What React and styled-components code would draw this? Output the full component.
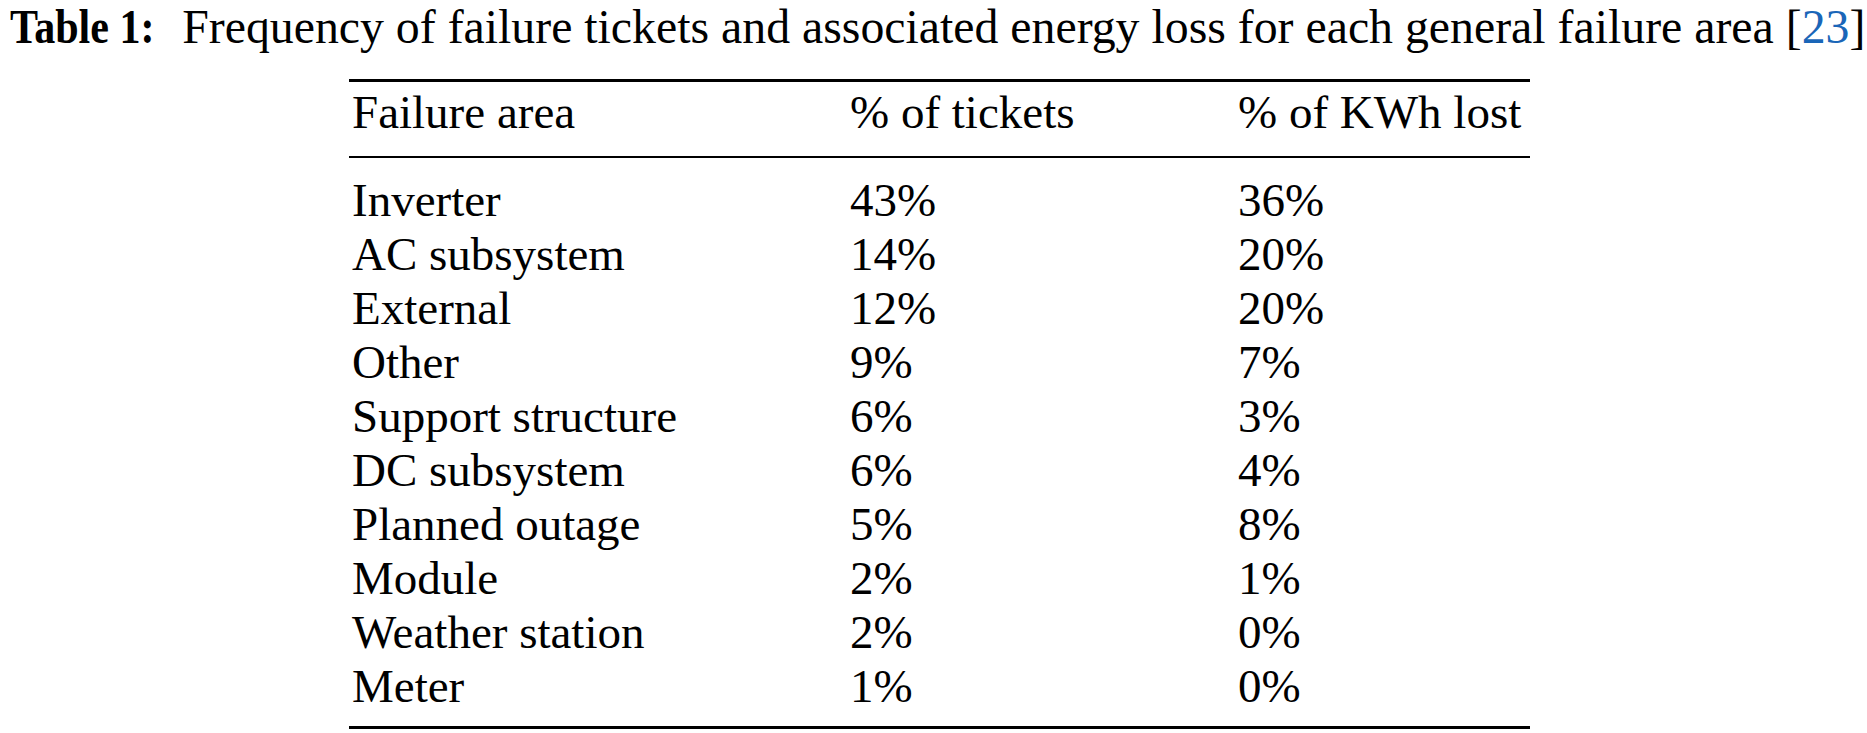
import React from "react";
import styled, { createGlobalStyle } from "styled-components";

const GlobalStyle = createGlobalStyle`
  html, body {
    margin: 0;
    padding: 0;
    background: #fff;
  }
  body {
    font-family: "Liberation Serif", "Times New Roman", serif;
    color: #000;
  }
`;

const Page = styled.div`
  width: 1867px;
  height: 733px;
  padding-left: 10px;
  box-sizing: border-box;
  overflow: hidden;
`;

const Caption = styled.p`
  margin: 0 0 26px 0;
  font-size: 47.8px;
  line-height: 53px;
  white-space: nowrap;
`;

// the bold label in the reference is narrower than plain Times bold
const CaptionLabel = styled.span`
  display: inline-block;
  font-weight: 700;
  transform: scaleX(0.88);
  transform-origin: left center;
  margin-right: -4px;
`;

const Ref = styled.span`
  color: #1a66b8;
`;

const TableBox = styled.div`
  width: 1181px;
  margin-left: 339px;
  border-top: 3px solid #000;
  border-bottom: 3px solid #000;
  font-size: 47px;
  line-height: 54px;
`;

const Row = styled.div`
  display: grid;
  grid-template-columns: 498px 388px 1fr;
  white-space: nowrap;
`;

const HeaderRow = styled(Row)`
  padding: 3px 0 17px;
  border-bottom: 2px solid #000;
`;

const Body = styled.div`
  padding: 15px 0 13px;
`;

const Cell = styled.div`
  padding-left: 3px;
`;

const rows = [
  ["Inverter", "43%", "36%"],
  ["AC subsystem", "14%", "20%"],
  ["External", "12%", "20%"],
  ["Other", "9%", "7%"],
  ["Support structure", "6%", "3%"],
  ["DC subsystem", "6%", "4%"],
  ["Planned outage", "5%", "8%"],
  ["Module", "2%", "1%"],
  ["Weather station", "2%", "0%"],
  ["Meter", "1%", "0%"],
];

export default function App() {
  return (
    <Page>
      <GlobalStyle />
      <Caption>
        <CaptionLabel>Table 1:</CaptionLabel> Frequency of failure tickets and
        associated energy loss for each general failure area [<Ref>23</Ref>]
      </Caption>
      <TableBox>
        <HeaderRow>
          <Cell>Failure area</Cell>
          <Cell>% of tickets</Cell>
          <Cell>% of KWh lost</Cell>
        </HeaderRow>
        <Body>
          {rows.map((r) => (
            <Row key={r[0]}>
              {r.map((c, i) => (
                <Cell key={i}>{c}</Cell>
              ))}
            </Row>
          ))}
        </Body>
      </TableBox>
    </Page>
  );
}
